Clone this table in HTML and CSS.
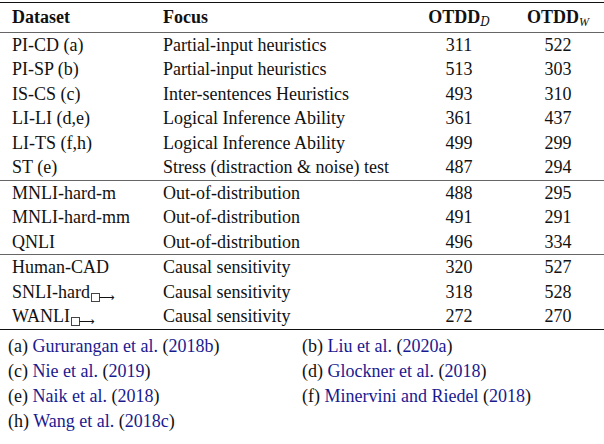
FILE: index.html
```html
<!DOCTYPE html>
<html>
<head>
<meta charset="utf-8">
<link rel="stylesheet" href="styles.css">
</head>
<body>
<div class="page">
  <table class="tbl">
    <colgroup>
      <col class="c1"><col class="c2"><col class="c3"><col class="c4">
    </colgroup>
    <thead>
      <tr class="head">
        <th class="l">Dataset</th>
        <th class="l">Focus</th>
        <th class="n">OTDD<sub class="scr">D</sub></th>
        <th class="n n4">OTDD<sub class="it">W</sub></th>
      </tr>
    </thead>
    <tbody class="grp">
      <tr><td>PI-CD (a)</td><td>Partial-input heuristics</td><td class="n">311</td><td class="n n4">522</td></tr>
      <tr><td>PI-SP (b)</td><td>Partial-input heuristics</td><td class="n">513</td><td class="n n4">303</td></tr>
      <tr><td>IS-CS (c)</td><td>Inter-sentences Heuristics</td><td class="n">493</td><td class="n n4">310</td></tr>
      <tr><td>LI-LI (d,e)</td><td>Logical Inference Ability</td><td class="n">361</td><td class="n n4">437</td></tr>
      <tr><td>LI-TS (f,h)</td><td>Logical Inference Ability</td><td class="n">499</td><td class="n n4">299</td></tr>
      <tr><td>ST (e)</td><td>Stress (distraction &amp; noise) test</td><td class="n">487</td><td class="n n4">294</td></tr>
    </tbody>
    <tbody class="grp">
      <tr><td>MNLI-hard-m</td><td>Out-of-distribution</td><td class="n">488</td><td class="n n4">295</td></tr>
      <tr><td>MNLI-hard-mm</td><td>Out-of-distribution</td><td class="n">491</td><td class="n n4">291</td></tr>
      <tr><td>QNLI</td><td>Out-of-distribution</td><td class="n">496</td><td class="n n4">334</td></tr>
    </tbody>
    <tbody class="grp last">
      <tr><td>Human-CAD</td><td>Causal sensitivity</td><td class="n">320</td><td class="n n4">527</td></tr>
      <tr><td>SNLI-hard<span class="arr"><span class="box"></span><span class="ar">⟶</span></span></td><td>Causal sensitivity</td><td class="n">318</td><td class="n n4">528</td></tr>
      <tr><td>WANLI<span class="arr"><span class="box"></span><span class="ar">⟶</span></span></td><td>Causal sensitivity</td><td class="n">272</td><td class="n n4">270</td></tr>
    </tbody>
  </table>
  <div class="notes">
    <div class="note">(a) <span class="ref">Gururangan et al.</span> (<span class="ref">2018b</span>)</div>
    <div class="note">(b) <span class="ref">Liu et al.</span> (<span class="ref">2020a</span>)</div>
    <div class="note">(c) <span class="ref">Nie et al.</span> (<span class="ref">2019</span>)</div>
    <div class="note">(d) <span class="ref">Glockner et al.</span> (<span class="ref">2018</span>)</div>
    <div class="note">(e) <span class="ref">Naik et al.</span> (<span class="ref">2018</span>)</div>
    <div class="note">(f) <span class="ref">Minervini and Riedel</span> (<span class="ref">2018</span>)</div>
    <div class="note">(h) <span class="ref">Wang et al.</span> (<span class="ref">2018c</span>)</div>
  </div>
</div>
</body>
</html>
```
FILE: styles.css
```css
html, body {
  margin: 0;
  padding: 0;
  background: #ffffff;
}
body {
  font-family: "Liberation Serif", "Times New Roman", serif;
  font-size: 18px;
  color: #111111;
}
.page {
  width: 604px;
  padding-top: 2px;
}
.tbl {
  width: 604px;
  border-collapse: collapse;
  table-layout: fixed;
  border-top: 1.5px solid #111;
  border-bottom: 1.5px solid #111;
}
.c1 { width: 151px; }
.c2 { width: 258px; }
.c3 { width: 100px; }
.c4 { width: 95px; }
th, td {
  padding: 0 0 0 12px;
  height: 24.5px;
  line-height: 24.5px;
  white-space: nowrap;
  text-align: left;
  vertical-align: middle;
}
.head th {
  height: 28.5px;
  line-height: 28.5px;
  font-weight: bold;
  border-bottom: 1px solid #666;
}
th.n, td.n {
  text-align: center;
  padding: 0;
}
th.n4, td.n4 {
  padding-left: 3px;
}
sub {
  font-size: 12px;
  line-height: 0;
  vertical-align: -3px;
}
.scr {
  font-family: "DejaVu Serif", serif;
  font-style: italic;
  font-weight: normal;
}
.it {
  font-style: italic;
  font-weight: normal;
}
.grp + .grp tr:first-child td {
  border-top: 1px solid #666;
}
.arr {
  display: inline-flex;
  align-items: flex-end;
  vertical-align: -4px;
  line-height: 1;
  margin-left: 1px;
}
.box {
  display: inline-block;
  width: 7px;
  height: 7px;
  border: 1px solid #444;
}
.ar {
  font-family: "DejaVu Sans", sans-serif;
  font-size: 11px;
  line-height: 9px;
  margin-left: -1px;
}
.notes {
  display: grid;
  grid-template-columns: 294px 1fr;
  grid-auto-rows: 25px;
  padding: 4px 0 0 8px;
}
.note {
  height: 25px;
  line-height: 25px;
}
.ref {
  color: #1a1a8f;
}
```
